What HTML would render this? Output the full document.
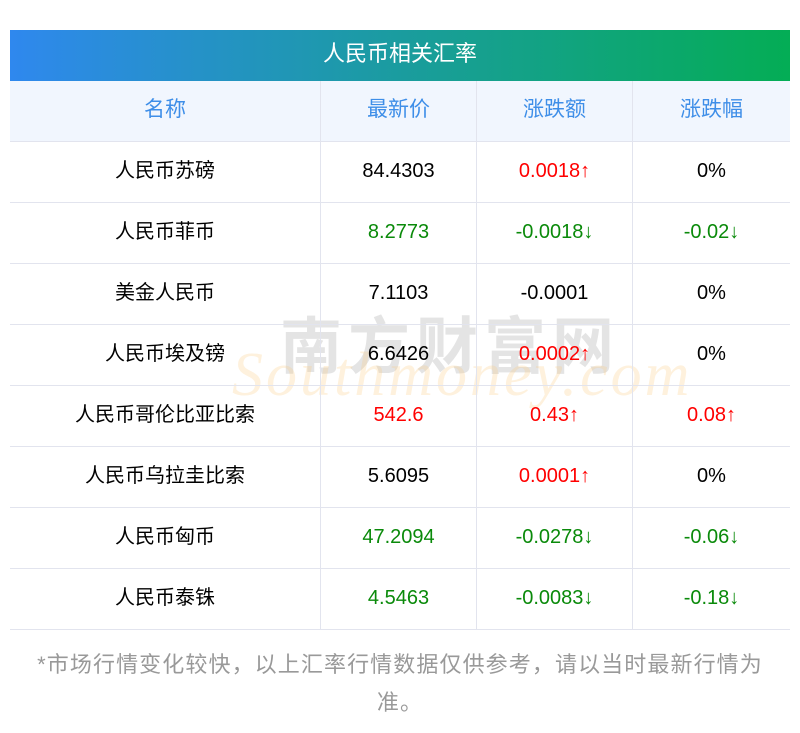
<!DOCTYPE html>
<html><head><meta charset="utf-8"><style>
body{margin:0;width:800px;height:733px;background:#fff;font-family:"Liberation Sans","Noto Sans CJK SC",sans-serif;position:relative;overflow:hidden}
.title{position:absolute;left:10px;top:30px;width:780px;height:51px;background:linear-gradient(90deg,#2f88ee,#16a08f 60%,#04ad55);color:#fff;font-size:22px;text-align:center;line-height:47px}
table{position:absolute;left:10px;top:81px;width:780px;border-collapse:collapse;font-size:20px}
td{border:1px solid #e2e4ee;height:57px;text-align:center;padding:0 0 3px 0;line-height:24px}
tr td:first-child{border-left:none}tr td:last-child{border-right:none}
tr:first-child td{border-top:none;background:#f1f6fe;color:#3e8ee8;font-size:21px}
.r{color:#f00}.g{color:#0a8a0a}
.wm1{position:absolute;left:280px;top:296px;font-size:62px;font-weight:bold;color:rgba(120,120,120,.2);letter-spacing:6px;font-family:"Noto Sans CJK SC",sans-serif}
.wm2{position:absolute;left:232px;top:340px;font-size:62px;font-style:italic;color:rgba(250,200,120,.25);letter-spacing:3px;font-family:"Liberation Serif",serif}
.foot{position:absolute;left:0;top:646px;width:800px;text-align:center;color:#999;font-size:22px;line-height:38px;letter-spacing:1.1px}
</style></head><body>
<div class="title">人民币相关汇率</div>
<div class="wm1">南方财富网</div>
<div class="wm2">Southmoney.com</div>
<table>
<tr><td style="width:310px">名称</td><td style="width:155px">最新价</td><td style="width:155px">涨跌额</td><td>涨跌幅</td></tr>
<tr><td>人民币苏磅</td><td>84.4303</td><td class="r">0.0018↑</td><td>0%</td></tr>
<tr><td>人民币菲币</td><td class="g">8.2773</td><td class="g">-0.0018↓</td><td class="g">-0.02↓</td></tr>
<tr><td>美金人民币</td><td>7.1103</td><td>-0.0001</td><td>0%</td></tr>
<tr><td>人民币埃及镑</td><td>6.6426</td><td class="r">0.0002↑</td><td>0%</td></tr>
<tr><td>人民币哥伦比亚比索</td><td class="r">542.6</td><td class="r">0.43↑</td><td class="r">0.08↑</td></tr>
<tr><td>人民币乌拉圭比索</td><td>5.6095</td><td class="r">0.0001↑</td><td>0%</td></tr>
<tr><td>人民币匈币</td><td class="g">47.2094</td><td class="g">-0.0278↓</td><td class="g">-0.06↓</td></tr>
<tr><td>人民币泰铢</td><td class="g">4.5463</td><td class="g">-0.0083↓</td><td class="g">-0.18↓</td></tr>
</table>
<div class="foot">*市场行情变化较快，以上汇率行情数据仅供参考，请以当时最新行情为<br>准。</div>
</body></html>
